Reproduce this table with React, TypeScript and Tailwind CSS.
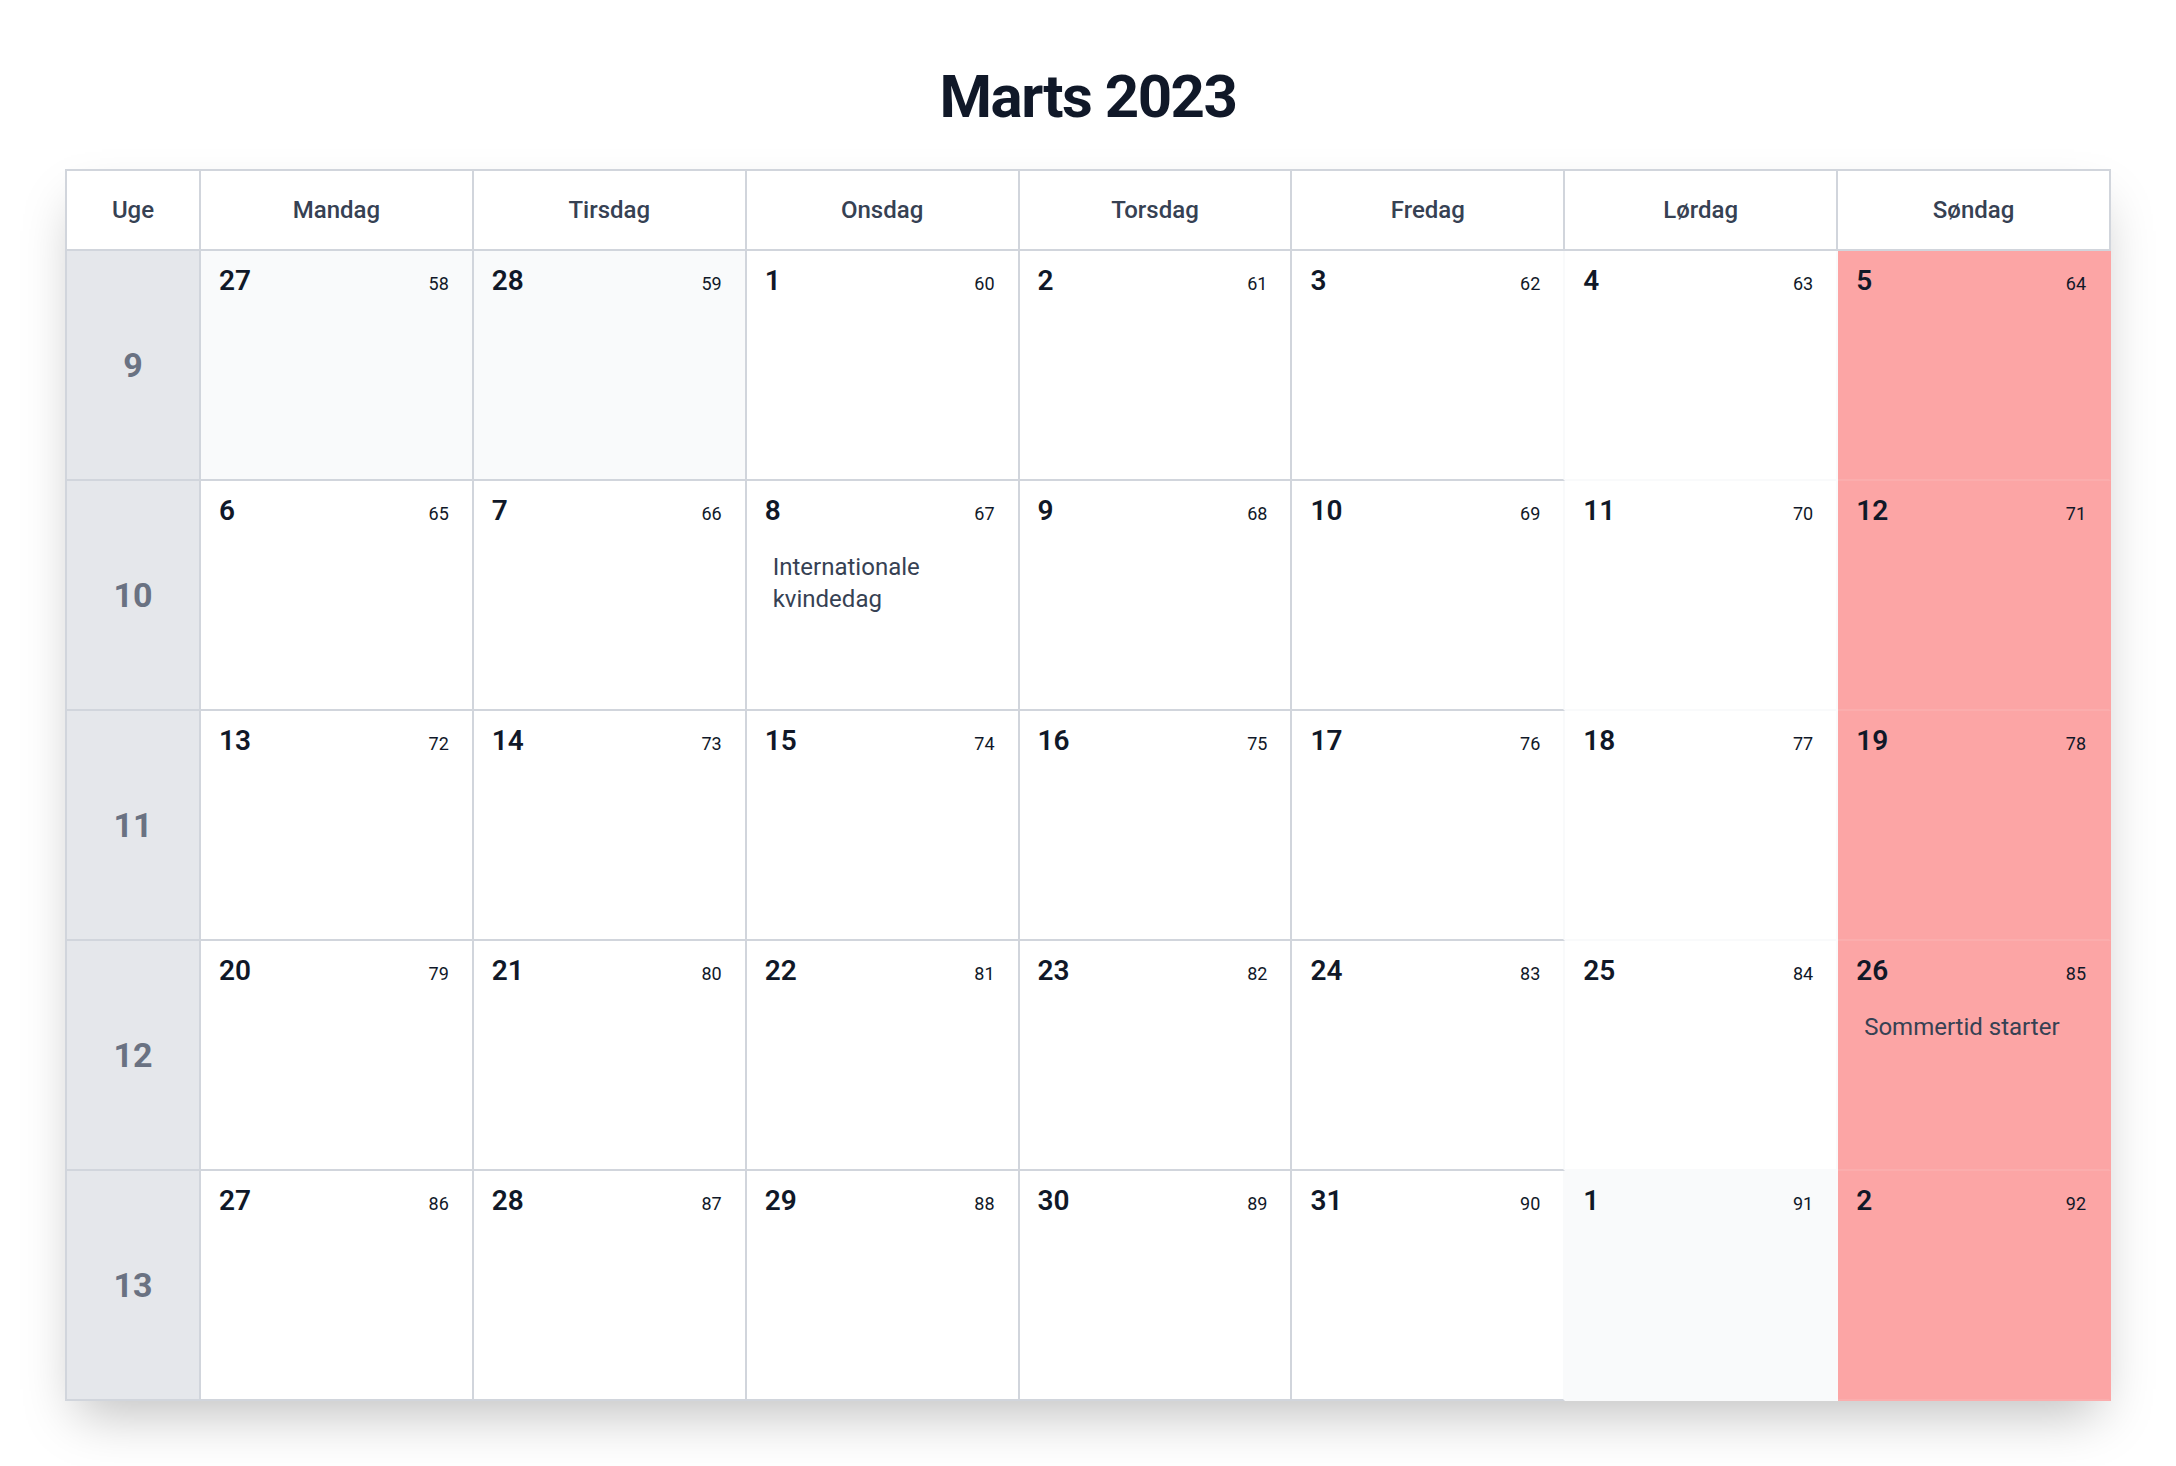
type Day = { d: number; n: number; other?: boolean; event?: string }

const weekdays = ["Mandag", "Tirsdag", "Onsdag", "Torsdag", "Fredag", "Lørdag", "Søndag"]

const weeks: { week: number; days: Day[] }[] = [
  {
    week: 9,
    days: [
      { d: 27, n: 58, other: true },
      { d: 28, n: 59, other: true },
      { d: 1, n: 60 },
      { d: 2, n: 61 },
      { d: 3, n: 62 },
      { d: 4, n: 63 },
      { d: 5, n: 64 },
    ],
  },
  {
    week: 10,
    days: [
      { d: 6, n: 65 },
      { d: 7, n: 66 },
      { d: 8, n: 67, event: "Internationale kvindedag" },
      { d: 9, n: 68 },
      { d: 10, n: 69 },
      { d: 11, n: 70 },
      { d: 12, n: 71 },
    ],
  },
  {
    week: 11,
    days: [
      { d: 13, n: 72 },
      { d: 14, n: 73 },
      { d: 15, n: 74 },
      { d: 16, n: 75 },
      { d: 17, n: 76 },
      { d: 18, n: 77 },
      { d: 19, n: 78 },
    ],
  },
  {
    week: 12,
    days: [
      { d: 20, n: 79 },
      { d: 21, n: 80 },
      { d: 22, n: 81 },
      { d: 23, n: 82 },
      { d: 24, n: 83 },
      { d: 25, n: 84 },
      { d: 26, n: 85, event: "Sommertid starter" },
    ],
  },
  {
    week: 13,
    days: [
      { d: 27, n: 86 },
      { d: 28, n: 87 },
      { d: 29, n: 88 },
      { d: 30, n: 89 },
      { d: 31, n: 90 },
      { d: 1, n: 91, other: true },
      { d: 2, n: 92, other: true },
    ],
  },
]

// border + background per weekday column
const cellStyle = (col: number, other?: boolean) => {
  if (col === 6) return "bg-[#fca5a5] border-r-2 border-b-2 border-[#fca5a5] border-b-[#fbadad]"
  if (col === 5) return `${other ? "bg-gray-50" : "bg-white"} border-r-2 border-b-2 border-gray-50`
  const bg = other ? "bg-gray-50" : "bg-white"
  if (col === 4) return `${bg} border-r-2 border-b-2 border-gray-300 border-r-gray-50`
  return `${bg} border-r-2 border-b-2 border-gray-300`
}

const DayCell = ({ day, col }: { day: Day; col: number }) => (
  <div className={`h-[230px] pt-4 pl-[18px] pr-[23px] ${cellStyle(col, day.other)}`}>
    <div className="flex items-baseline justify-between">
      <span className="text-[28px] leading-none font-semibold text-gray-900">{day.d}</span>
      <span className="text-lg leading-none text-gray-900">{day.n}</span>
    </div>
    {day.event && (
      <p className="mt-[26px] px-2 text-2xl leading-8 text-gray-700">{day.event}</p>
    )}
  </div>
)

export default function App() {
  return (
    <div className="min-h-screen bg-white font-['Roboto',sans-serif] px-[65px]">
      <h1 className="pt-[67px] pb-[42px] text-center text-[60px] leading-none font-bold tracking-tight text-gray-900">
        Marts 2023
      </h1>

      <div className="grid grid-cols-[134px_repeat(7,1fr)] border-t-2 border-l-2 border-gray-300 shadow-2xl">
        {/* Header */}
        <div className="h-[80px] flex items-center justify-center border-r-2 border-b-2 border-gray-300 text-2xl font-medium text-gray-700">
          Uge
        </div>
        {weekdays.map((name) => (
          <div
            key={name}
            className="h-[80px] flex items-center justify-center border-r-2 border-b-2 border-gray-300 text-2xl font-medium text-gray-700"
          >
            {name}
          </div>
        ))}

        {/* Weeks */}
        {weeks.map((w) => (
          <div key={w.week} className="contents">
            <div className="h-[230px] flex items-center justify-center bg-gray-200 border-r-2 border-b-2 border-gray-300 text-[34px] font-bold text-gray-500">
              {w.week}
            </div>
            {w.days.map((day, i) => (
              <DayCell key={i} day={day} col={i} />
            ))}
          </div>
        ))}
      </div>
    </div>
  )
}
